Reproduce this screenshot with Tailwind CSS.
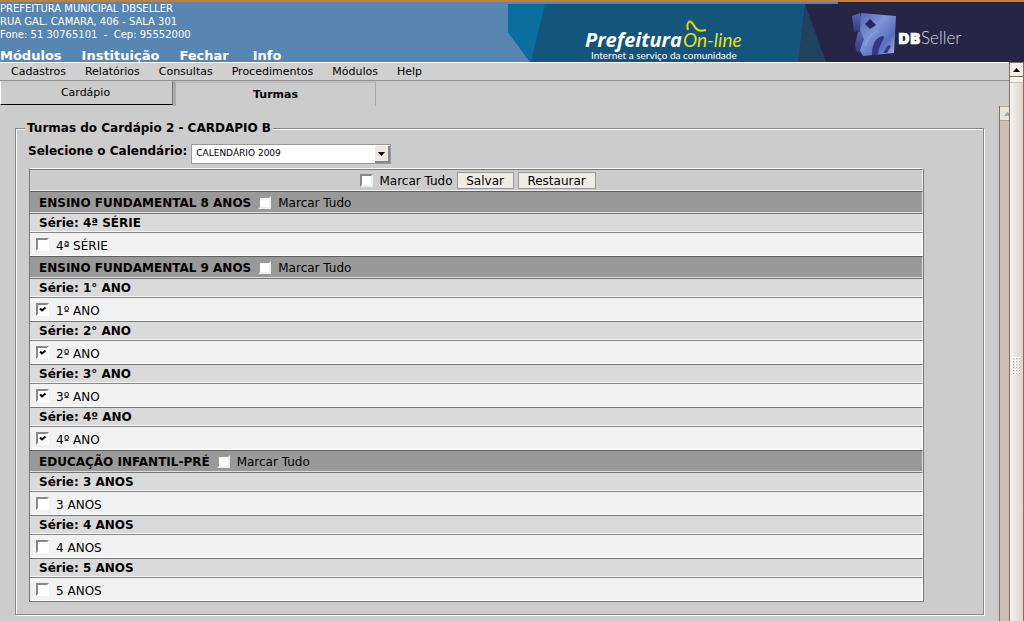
<!DOCTYPE html>
<html lang="pt-BR">
<head>
<meta charset="utf-8">
<meta name="viewport" content="width=device-width, initial-scale=1">
<title>Turmas do Cardápio</title>
<script src="https://cdn.jsdelivr.net/npm/@tailwindcss/browser@4"></script>
</head>
<body class="flex min-h-screen flex-col bg-[#ccc] font-['DejaVu_Sans',Verdana,sans-serif] text-xs leading-4 text-black">

<header class="flex justify-between border-t-2 border-[#c87f35] bg-[#5786b3] text-white">
  <div class="flex h-15 flex-col justify-between whitespace-nowrap">
    <address class="text-[10px] leading-[13px] not-italic">PREFEITURA MUNICIPAL DBSELLER<br>RUA GAL. CAMARA, 406 - SALA 301<br>Fone: 51 30765101 &nbsp;-&nbsp; Cep: 95552000</address>
    <nav class="flex gap-5 text-[13px] leading-3 font-bold">
      <a href="#">Módulos</a><a href="#">Instituição</a><a href="#">Fechar</a><a href="#" class="pl-1">Info</a>
    </nav>
  </div>
  <svg class="h-15 w-[516px] shrink-0" viewBox="0 0 516 60" role="img" aria-label="Prefeitura On-line, DBSeller">
    <defs>
      <linearGradient id="face" x1="0" y1="0" x2="1" y2="1"><stop offset="0" stop-color="#5568b8"/><stop offset=".4" stop-color="#7e93d8"/><stop offset=".7" stop-color="#5870c0"/><stop offset="1" stop-color="#a9bdee"/></linearGradient>
      <linearGradient id="side" x1="0" y1="0" x2="0" y2="1"><stop offset="0" stop-color="#5a66b0"/><stop offset="1" stop-color="#32387c"/></linearGradient>
    </defs>
    <path d="M0 2H297L318 60H22L0 30Z" fill="#14557c"/>
    <path d="M0 2H37L23 60L0 30Z" fill="#0a6e9e"/>
    <path d="M297 2H330V60H290Z" fill="#20415f"/>
    <path d="M297 2H330V0H516V60H318Z" fill="#262545"/>
    <text x="77" y="45" font-family="'Open Sans',sans-serif" font-size="20" font-weight="700" font-style="italic" fill="#fff">Prefeitura</text>
    <text x="175" y="45" font-family="Lato,sans-serif" font-size="19" font-style="italic" fill="#e9df18">On-line</text>
    <path d="M180 28C178 20 182 17 185 22C188 28 191 30 198 28" fill="none" stroke="#e9d800" stroke-width="2"/>
    <text x="83" y="57" font-family="Lato,sans-serif" font-size="10" fill="#fff">Internet a serviço da comunidade</text>
    <path d="M344 14L352 11L356 28L346 30Z" fill="url(#side)"/>
    <path d="M350 30L356 27V53L348 49L347 42Z" fill="url(#side)"/>
    <path d="M353 11L388 14L386 51L355 54L352 48L356 37L352 28Z" fill="url(#face)"/>
    <path d="M357 22L362 17L368 23L362 27Z" fill="#252763"/>
    <path d="M364 53C364 43 367 36 374 34C380 35 371 40 370 53Z" fill="#303a85"/>
    <path d="M375 51L380 43L383 44L379 51Z" fill="#303a85"/>
    <path d="M357 44C360 35 364 31 370 29" fill="none" stroke="#93a6e2"/>
    <text x="390" y="42" font-family="'Open Sans',sans-serif" font-size="16" font-weight="800" fill="#fff" stroke="#fff" stroke-width=".6">DB</text>
    <text x="413" y="42" font-family="Lato,sans-serif" font-size="17" font-weight="300" fill="#d6d4e3">Seller</text>
  </svg>
</header>

<div class="flex flex-1">
  <div class="flex min-w-0 flex-1 flex-col">
    <nav class="flex h-[19px] items-center gap-[19px] border-t border-b border-t-white border-b-[#909090] bg-[#d0d0d0] pl-[11px] text-[11px]">
      <a href="#">Cadastros</a><a href="#">Relatórios</a><a href="#">Consultas</a><a href="#">Procedimentos</a><a href="#">Módulos</a><a href="#">Help</a>
    </nav>

    <div class="flex items-start text-[11px]">
      <button type="button" class="h-6 w-[173px] border-r border-b border-l border-l-white border-r-[#777] border-b-black pr-0.5">Cardápio</button>
      <button type="button" class="h-[25px] w-[203px] border-t-2 border-r border-l-3 border-t-[#bbb] border-r-[#aaa] border-l-[#aaa] font-bold">Turmas</button>
    </div>

    <div class="flex flex-1">
      <main class="min-w-0 flex-1 pt-[14px] pr-[15px] pl-[15px]">
        <form>
          <fieldset class="border border-[#888] pr-[59px] pb-3 pl-[13px] shadow-[inset_1px_1px_#f8f8f8,1px_1px_#f8f8f8]">
            <legend class="-ml-1 bg-[#ccc] px-0.5 font-bold">Turmas do Cardápio 2 - CARDAPIO B</legend>
            <div class="-ml-px flex items-start gap-1 pt-2">
              <label for="calendario" class="font-bold leading-[14px]">Selecione o Calendário:</label>
              <div class="relative">
                <select id="calendario" class="block h-5 w-[200px] appearance-none border border-[#999] bg-white pb-[3px] pl-1 text-[9px]"><option>CALENDÁRIO 2009</option></select>
                <span class="pointer-events-none absolute top-0.5 right-px bottom-px flex w-[15px] items-center justify-center border-r-2 border-b-2 border-[#888] bg-[#ece9e3]">
                  <svg class="h-1 w-[7px]" viewBox="0 0 7 4"><path d="M0 0H7L3.5 4Z"/></svg>
                </span>
              </div>
            </div>
            <table class="mt-1 w-full border-separate border-spacing-0 border border-t-[#f8f8f8] border-r-[#777] border-b-[#777] border-l-[#777]" id="turmas">
              <tbody>
                <tr class="h-[22px]"><td class="border-t border-r border-b border-t-[#777] border-r-[#f0f0f0] border-b-[#f0f0f0] p-0"><div class="flex h-5 items-center justify-center gap-1 pl-1">
                  <input id="todos" type="checkbox" class="mr-0.5 size-[13px] appearance-none border-2 border-t-[#888] border-l-[#888] border-r-[#eee] border-b-[#eee] bg-white"><label for="todos" class="pt-0.5">Marcar Tudo</label>
                  <button type="button" class="h-[17px] w-[57px] border border-[#999] bg-[#efebe5] leading-4">Salvar</button>
                  <button type="reset" class="h-[17px] w-[78px] border border-[#999] bg-[#efebe5] leading-4">Restaurar</button>
                </div></td></tr>
              </tbody>
            </table>
          </fieldset>
        </form>
      </main>
      <div class="w-[10px] border-l border-[#806f62] bg-[#cbbfb4]">
        <button type="button" aria-label="Rolar para cima" class="flex h-[15px] w-full items-center justify-center border-t border-b border-[#aaa198] bg-[#e8e5de] pl-1"><svg class="h-1 w-[5px]" viewBox="0 0 5 4"><path d="M0 4H5V1L3 0Z" fill="#aaa79f"/></svg></button>
      </div>
    </div>
  </div>
  <div class="flex w-[15px] flex-col border-r border-l border-[#806f62] bg-linear-to-r from-[#f5f2ef] to-[#ddd5cc]">
    <button type="button" aria-label="Rolar a página para cima" class="flex h-[15px] items-center justify-center border-t border-b border-[#806f62] bg-[#f2efea]"><svg class="h-1 w-[7px]" viewBox="0 0 7 4"><path d="M0 4H7L3.5 0Z"/></svg></button>
    <div class="h-1.5 border-b border-[#c9c2b8] bg-[#f5f3ef]"></div>
    <div class="flex flex-1 items-center justify-center pt-[68px] pb-[40px]">
      <svg class="h-[18px] w-[9px]" viewBox="0 0 9 18"><defs><pattern id="grip" width="3" height="3" patternUnits="userSpaceOnUse"><path d="M0 0H2V2H0Z" fill="#fff"/><path d="M1 1H2V2H1Z" fill="#b5aea6"/></pattern></defs><path d="M0 0H9V18H0Z" fill="url(#grip)"/></svg>
    </div>
  </div>
</div>

<template id="grupo">
  <tr class="h-[22px]"><td class="border-t border-r border-b border-t-[#606060] border-r-[#e0e0e0] border-b-[#ddd] bg-[#999] p-0"><div class="flex h-5 items-center pl-[9px]"><strong class="pt-0.5">&nbsp;</strong><input type="checkbox" class="mr-[7px] ml-[7px] size-[13px] appearance-none border-2 border-t-[#999] border-l-[#999] border-r-[#eee] border-b-[#eee] bg-white"><label class="pt-0.5">Marcar Tudo</label></div></td></tr>
</template>
<template id="serie">
  <tr class="h-[19px]"><th scope="rowgroup" class="border-t border-r border-b border-t-[#777] border-r-[#f4f4f4] border-b-[#f4f4f4] bg-[#dadada] p-0 text-left"><div class="flex h-[17px] items-center pl-[9px]"></div></th></tr>
</template>
<template id="turma">
  <tr class="h-6"><td class="border-t border-r border-b border-t-[#888] border-r-white border-b-white bg-[#f2f2f2] p-0"><div class="flex h-[22px] items-center pl-1.5"><span class="mr-[7px] grid size-[13px]"><input type="checkbox" class="peer col-start-1 row-start-1 size-[13px] appearance-none border-2 border-t-[#888] border-l-[#888] border-r-white border-b-white bg-white"><svg class="pointer-events-none invisible col-start-1 row-start-1 size-[13px] peer-checked:visible" viewBox="0 0 13 13"><path d="M4 5.5L6 7.5L9.5 4.5" fill="none" stroke="#000" stroke-width="2"/></svg></span><label class="pt-[3px]"></label></div></td></tr>
</template>
<script>
  const grupos = [
    ['ENSINO FUNDAMENTAL 8 ANOS', [['4ª SÉRIE', '4ª SÉRIE', false]]],
    ['ENSINO FUNDAMENTAL 9 ANOS', [['1° ANO', '1º ANO', true], ['2° ANO', '2º ANO', true], ['3° ANO', '3º ANO', true], ['4º ANO', '4º ANO', true]]],
    ['EDUCAÇÃO INFANTIL-PRÉ', [['3 ANOS', '3 ANOS', false], ['4 ANOS', '4 ANOS', false], ['5 ANOS', '5 ANOS', false]]]
  ];
  const corpo = document.querySelector('#turmas tbody');
  const clonar = id => document.getElementById(id).content.cloneNode(true);
  const ligar = (linha, id) => {
    linha.querySelector('input').id = id;
    linha.querySelector('label').htmlFor = id;
  };
  grupos.forEach(([nome, series], g) => {
    const cabecalho = clonar('grupo');
    cabecalho.querySelector('strong').textContent = nome;
    ligar(cabecalho, 'grupo' + g);
    corpo.append(cabecalho);
    series.forEach(([serie, turma, marcada], s) => {
      const titulo = clonar('serie');
      titulo.querySelector('div').textContent = 'Série: ' + serie;
      corpo.append(titulo);
      const linha = clonar('turma');
      linha.querySelector('label').textContent = turma;
      linha.querySelector('input').checked = marcada;
      ligar(linha, 'turma' + g + '-' + s);
      corpo.append(linha);
    });
  });
</script>
</body>
</html>
